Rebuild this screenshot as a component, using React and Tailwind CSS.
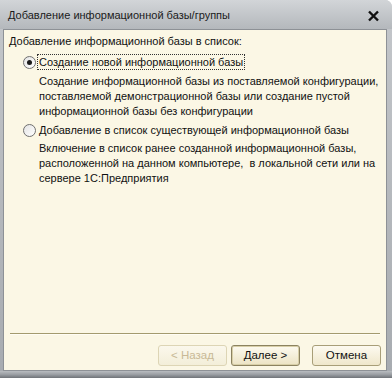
import React, { useState } from "react";

function Radio({ checked, label, focused, onSelect }) {
  return (
    <div className="flex items-center h-[16px] cursor-default" onClick={onSelect}>
      <span className="w-[13px] h-[13px] rounded-full border border-[#6f6f6f] bg-gradient-to-br from-[#e4e4e4] to-white flex items-center justify-center shrink-0">
        {checked && <span className="w-[5px] h-[5px] rounded-full bg-[#1a1a1a]" />}
      </span>
      <span
        className={
          "ml-[1px] px-[1px] h-[16px] leading-[14px] border border-dotted whitespace-nowrap " +
          (focused ? "border-[#333]" : "border-transparent")
        }
      >
        {label}
      </span>
    </div>
  );
}

function Button({ children, disabled, primary }) {
  let cls =
    "w-[69px] h-[21px] rounded-[3px] text-[11.5px] leading-none flex items-center justify-center bg-gradient-to-b ";
  if (disabled) {
    cls += "border border-[#ddd5b5] from-[#fbf8ec] to-[#f3eed9] text-[#c8b996]";
  } else if (primary) {
    cls +=
      "border border-[#8c8260] shadow-[inset_0_0_0_1px_#d8cfa8] from-[#fdfaf0] to-[#ece3c4] text-[#111]";
  } else {
    cls += "border border-[#a89e78] from-[#fdfaf0] to-[#efe7cb] text-[#111]";
  }
  return (
    <button className={cls} disabled={disabled}>
      {children}
    </button>
  );
}

export default function App() {
  const [mode, setMode] = useState("new");

  return (
    <div
      className="w-[392px] h-[378px] flex flex-col bg-gradient-to-b from-[#c4c7cb] to-[#a7abb0] rounded-tr-[7px] overflow-hidden text-[#111]"
      style={{ fontFamily: '"Liberation Sans", Arial, sans-serif' }}
    >
      {/* title bar */}
      <div className="h-[29px] flex items-center justify-between pl-[8px] pr-[12px] bg-gradient-to-b from-[#d2d5d8] to-[#b4b8bc] shrink-0">
        <span className="text-[11px] text-[#1b1b1b] pt-[2px] whitespace-nowrap">
          Добавление информационной базы/группы
        </span>
        <svg width="13" height="12" viewBox="0 0 13 12" className="mt-[2px]">
          <path d="M2 1.5 L11 10.5 M11 1.5 L2 10.5" stroke="#111" strokeWidth="2.4" />
        </svg>
      </div>

      {/* body */}
      <div className="flex-1 flex ml-[3px] mr-[5px]">
        <div className="flex-1 flex flex-col bg-[#fbf7e5] border border-[#8d9196] text-[11px] leading-[15px] whitespace-nowrap">
          <div className="pt-[4px] pl-[5px]">Добавление информационной базы в список:</div>

          <div className="pl-[19px] mt-[5px]">
            <Radio
              checked={mode === "new"}
              focused={mode === "new"}
              label="Создание новой информационной базы"
              onSelect={() => setMode("new")}
            />
          </div>
          <div className="pl-[35px] mt-[4px]">
            <div>Создание информационной базы из поставляемой конфигурации,</div>
            <div>поставляемой демонстрационной базы или создание пустой</div>
            <div>информационной базы без конфигурации</div>
          </div>

          <div className="pl-[19px] mt-[3px]">
            <Radio
              checked={mode === "existing"}
              focused={mode === "existing"}
              label="Добавление в список существующей информационной базы"
              onSelect={() => setMode("existing")}
            />
          </div>
          <div className="pl-[35px] mt-[3px]">
            <div>Включение в список ранее созданной информационной базы,</div>
            <div>расположенной на данном компьютере,&nbsp; в локальной сети или на</div>
            <div>сервере 1С:Предприятия</div>
          </div>

          <div className="flex-1" />

          <div className="mx-[6px] h-[1px] bg-[#a39a6e] shadow-[0_1px_0_#fffdf4]" />

          <div className="flex justify-end gap-[4px] pr-[5px] pt-[11px] pb-[4px]">
            <Button disabled>&lt; Назад</Button>
            <Button primary>Далее &gt;</Button>
            <div className="w-[4px]" />
            <Button>Отмена</Button>
          </div>
        </div>
      </div>

      {/* bottom frame */}
      <div className="h-[7px] shrink-0 bg-gradient-to-b from-[#b9bcc0] via-[#9a9ea3] to-[#6f7378]" />
    </div>
  );
}
